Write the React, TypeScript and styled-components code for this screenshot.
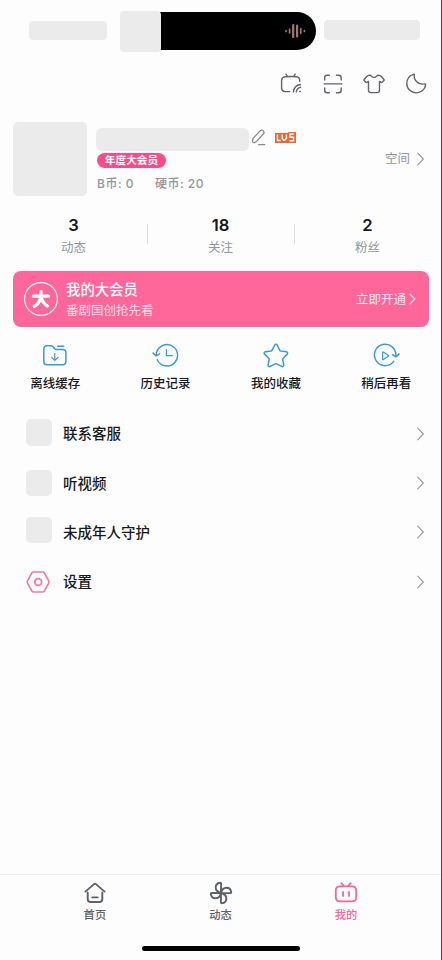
import React from 'react';
import styled, { createGlobalStyle } from 'styled-components';

const GlobalStyle = createGlobalStyle`
  * { box-sizing: border-box; }
  body {
    margin: 0;
    background: #fdfdfd;
    font-family: Inter, "Noto Sans CJK SC", sans-serif;
  }
  svg { display: block; flex: none; }
`;

const Page = styled.div`
  width: 442px;
  height: 960px;
  overflow: hidden;
  display: flex;
  flex-direction: column;
  background: #fdfdfd;
  border-right: 1px solid #45464a;
`;

const Placeholder = styled.div<{ $w: number; $h: number; $r?: number; $top?: number }>`
  flex: none;
  width: ${p => p.$w}px;
  height: ${p => p.$h}px;
  margin-top: ${p => p.$top ?? 0}px;
  border-radius: ${p => p.$r ?? 4}px;
  background: #ebebeb;
`;

const StatusBar = styled.header`
  height: 62px;
  padding: 10px 21px 0 29px;
  display: flex;
  align-items: flex-start;
`;

const IslandGroup = styled.div`
  display: flex;
  align-items: flex-start;
  margin: 0 8px 0 13px;
`;

const Island = styled.div`
  width: 159px;
  height: 38px;
  margin: 2px 0 0 -4px;
  padding-right: 9px;
  display: flex;
  align-items: center;
  justify-content: flex-end;
  background: #000;
  border-radius: 0 19px 19px 0;
`;

const IslandCover = styled(Placeholder)`
  z-index: 1;
`;

const Toolbar = styled.nav`
  height: 44px;
  padding-right: 14px;
  display: flex;
  align-items: center;
  justify-content: flex-end;
  gap: 19.7px;
  color: #62656b;
`;

const Profile = styled.section`
  height: 90px;
  padding: 16px 17px 0 13px;
  display: flex;
`;

const Identity = styled.div`
  flex: 1;
  padding: 6px 0 0 9px;
`;

const NameRow = styled.div`
  height: 23px;
  display: flex;
  align-items: flex-start;
`;

const EditSlot = styled.div`
  width: 15px;
  margin: 1px 8px 0 2px;
  color: #85888d;
`;

const LevelSlot = styled.div`
  margin: 4px 0 0 1px;
`;

const VipTag = styled.div`
  width: 69px;
  height: 15px;
  margin: 2px 0 0 1px;
  border-radius: 8px;
  background: #fb4c86;
  color: #fff;
  font-size: 10.7px;
  line-height: 16px;
  font-weight: 700;
  text-align: center;
`;

const Coins = styled.div`
  display: flex;
  gap: 21px;
  margin: 6px 0 0 1px;
  color: #93969d;
  font-size: 12px;
  font-weight: 500;
  line-height: 19px;
  letter-spacing: 0.5px;
  white-space: nowrap;
`;

const SpaceLink = styled.div`
  height: 20px;
  margin-top: 27px;
  display: flex;
  align-items: center;
  gap: 7px;
  color: #93969d;
  font-size: 12.5px;
  line-height: 18px;
`;

const SpaceLabel = styled.span`
  padding-bottom: 1px;
`;

const Stats = styled.section`
  height: 75px;
  padding-top: 18px;
  display: grid;
  grid-template-columns: repeat(3, 147px);
`;

const Stat = styled.div<{ $divided: boolean }>`
  height: 45px;
  text-align: center;
  position: relative;
  &::after {
    content: "";
    display: ${p => (p.$divided ? 'block' : 'none')};
    position: absolute;
    top: 10px;
    right: -1px;
    width: 1px;
    height: 20px;
    background: #dddee0;
  }
`;

const StatValue = styled.div`
  height: 23px;
  color: #18191c;
  font-size: 16.6px;
  font-weight: 600;
  line-height: 22px;
`;

const StatLabel = styled.div`
  color: #93969d;
  font-size: 12.5px;
  line-height: 21px;
`;

const Banner = styled.section`
  flex: none;
  height: 56px;
  margin: 0 12px 0 12.5px;
  padding: 0 13px 0 11.5px;
  display: flex;
  align-items: center;
  border-radius: 8px;
  background: #ff6699;
  color: #fff;
`;

const BannerText = styled.div`
  flex: 1;
  padding: 2px 0 0 8px;
`;

const BannerTitle = styled.div`
  font-size: 14.4px;
  font-weight: 500;
  line-height: 20px;
`;

const BannerSub = styled.div`
  color: #ffdce8;
  font-size: 12.5px;
  line-height: 21px;
`;

const BannerAction = styled.div`
  display: flex;
  align-items: center;
  gap: 3px;
  color: #ffeaf1;
  font-size: 12.5px;
  line-height: 20px;
`;

const BannerActionLabel = styled.span`
  padding-top: 1px;
`;

const Shortcuts = styled.section`
  height: 81px;
  padding-top: 16px;
  display: grid;
  grid-template-columns: repeat(4, 110.4px);
`;

const Shortcut = styled.div`
  display: flex;
  flex-direction: column;
  align-items: center;
  color: #3a9bd3;
`;

const ShortcutLabel = styled.div`
  margin-top: 5px;
  color: #18191c;
  font-size: 12.5px;
  font-weight: 500;
  line-height: 20px;
`;

const Menu = styled.section`
  flex: 1;
  padding: 1px 17px 0 25px;
`;

const MenuRow = styled.div`
  height: 49.4px;
  display: flex;
  align-items: center;
  color: #9a9a9c;
`;

const MenuIcon = styled.div<{ $shift: number }>`
  width: 38px;
  padding-left: 1px;
  margin-top: ${p => p.$shift}px;
`;

const MenuLabel = styled.div`
  flex: 1;
  padding-top: 1px;
  color: #18191c;
  font-size: 14.5px;
  font-weight: 500;
  line-height: 22px;
`;

const TabBar = styled.footer`
  height: 86px;
  border-top: 1px solid #ececee;
  display: flex;
  flex-direction: column;
  align-items: center;
`;

const Tabs = styled.div`
  height: 71px;
  padding-top: 6px;
  display: grid;
  grid-template-columns: repeat(3, 125.6px);
`;

const Tab = styled.div<{ $active: boolean }>`
  display: flex;
  flex-direction: column;
  align-items: center;
  color: ${p => (p.$active ? '#f5679a' : '#5f6269')};
  font-size: 11.3px;
  font-weight: 500;
  line-height: 16px;
`;

const TabLabel = styled.div`
  margin-top: 2px;
`;

const HomeIndicator = styled.div`
  width: 158px;
  height: 5px;
  border-radius: 3px;
  background: #000;
`;

type IconProps = { w?: number; h?: number; sw?: number; children: React.ReactNode };

const Icon = ({ w = 24, h = 24, sw = 1.4, children }: IconProps) => (
  <svg width={w} height={h} viewBox={`0 0 ${w} ${h}`} fill="none" stroke="currentColor"
    strokeWidth={sw} strokeLinecap="round" strokeLinejoin="round">
    {children}
  </svg>
);

const Chevron = ({ small = false }: { small?: boolean }) => small ? (
  <Icon w={7} h={12} sw={1.1}><path d="M1 1.2 5.8 6 1 10.8" /></Icon>
) : (
  <Icon w={7} h={14} sw={1.1}><path d="M.7 1.2 6.3 7 .7 12.8" /></Icon>
);

const WaveIcon = () => (
  <svg width="23" height="16" viewBox="0 0 23 16" stroke="#9b7a70" strokeLinecap="round">
    <path strokeWidth="1.7" d="M2 7.6v.8M5.6 6v4M16.8 5.7v4.6M20.4 7.6v.8" />
    <path strokeWidth="2.2" d="M9.2 2v12M13.1 2.6v10.8" />
  </svg>
);

const CastIcon = () => (
  <Icon w={22}>
    <path d="M6 2.2 7.4 4.6M15.2 2.2 13.8 4.6M9.8 19.6H5.2c-2.3-.1-3.4-1.1-3.6-3.2V8.2C1.8 6 2.9 5 5.2 4.8c3.7-.3 7.4-.3 11 0 2.3.2 3.4 1.2 3.5 3.4v1.2" />
    <path d="M13.4 19.8c.5-3.7 3.3-6.8 7.2-7.3M16.3 19.8c.4-2.2 2-4 4.3-4.5M19.7 19.5h.6" />
  </Icon>
);

const ScanIcon = () => (
  <Icon w={22}>
    <path d="M2.7 8V5.7c0-1.5.8-2.5 2.4-2.5h2.3M14.4 3.2h2.3c1.6 0 2.5 1 2.5 2.5V8M2.7 16v2.2c0 1.6.8 2.5 2.4 2.5h2.3M14.4 20.7h2.3c1.6 0 2.5-.9 2.5-2.5V16M2.2 11.9h17.6" />
  </Icon>
);

const ShirtIcon = () => (
  <Icon w={22}>
    <path d="M6.6 3.2c.9 0 1.3.3 1.8 1 1.1 1.6 4.1 1.6 5.2 0 .5-.7.9-1 1.8-1 1.3 0 2.2.4 3 1.3l2.3 2.7c.5.6.5 1.1 0 1.6l-1.3 1.3c-.6.6-1.1.5-1.7.1l-1.2-.8v8.9c0 1.6-.7 2.3-2.3 2.3H7.8c-1.6 0-2.3-.7-2.3-2.3V9.4l-1.2.8c-.6.4-1.1.5-1.7-.1L1.3 8.8c-.5-.5-.5-1 0-1.6l2.3-2.7c.8-.9 1.7-1.3 3-1.3Z" />
  </Icon>
);

const MoonIcon = () => (
  <Icon w={22}>
    <path d="M9.3 2.3c-1 4.8 3.4 11 10.3 9.6.7-.1 1.1.2 1 1-.5 4.5-4.5 8-9.1 8-5.2 0-9.7-4-9.7-9.2 0-4.3 2.7-8 6.5-9.3.8-.3 1.1-.4 1-.1Z" />
  </Icon>
);

const EditIcon = () => (
  <Icon w={15} h={17} sw={1.3}>
    <path d="m1.8 11.2.2-1.8L9.1 1.9c1-1 2.3-.9 3.2 0 .9 1 .9 2.1 0 3.1l-6.5 7.1c-.9 1-1.5 1.7-3 1.6-1 0-1.3-.7-1-2.5ZM7.7 15.7h6" />
  </Icon>
);

const LevelIcon = () => (
  <svg width="21" height="11" viewBox="0 0 21 11" fill="none">
    <path d="M1 1h12.3V0H21v11H0V1Z" fill="#f2632f" />
    <path d="M2.5 2.4v6.2h3.2M7.2 2.6v3.7l1.5 2h1l1.7-2V2.6M18.8 2H15v3.2h3.5v3.6h-4.1" stroke="#fff" strokeWidth="1.5" />
  </svg>
);

const BigVipIcon = () => (
  <svg width="34" height="34" viewBox="0 0 34 34" fill="none" stroke="#fff">
    <circle cx="17" cy="17" r="16.4" strokeWidth="1.1" />
    <path d="M9.4 14.2h15.2M17.1 9.7c.3 7-1.9 12-6.8 14.7M17.3 15.3c.7 4 2.7 6.8 6.1 8.7" strokeWidth="3.3" strokeLinecap="round" />
  </svg>
);

const FolderIcon = () => (
  <Icon w={26} h={26} sw={1.5}>
    <path d="M1.8 6c0-2 1-3.2 3.1-3.2h4.2c1.2 0 1.8.4 2.4 1.3l.8 1.2c.5.8 1 1.1 2 1.1h6.3c2.2 0 3.3 1.1 3.3 3.2v8.9c0 2.2-1.1 3.2-3.3 3.2H4.9c-2.1 0-3.1-1-3.1-3.2ZM15.7 3.2h6" />
    <path strokeWidth="1.2" d="M12.8 10.3v7M9.7 14.4l3.1 3 3.2-3" />
  </Icon>
);

const HistoryIcon = () => (
  <Icon w={28} h={26} sw={1.5}>
    <path d="M4.2 12A10.7 10.7 0 1 1 5.2 16.8M1 10l3.2 3 3.3-2.2" />
    <path strokeWidth="1.2" d="M14.4 6.5v6.1h6" />
  </Icon>
);

const StarIcon = () => (
  <Icon w={26} h={26} sw={1.5}>
    <path d="M11.8 2c.5-1 1.8-1 2.3 0l2.6 5.2c.2.4.5.6.9.7l5.8.8c1.2.2 1.7 1.5.8 2.4l-4.1 4.1c-.3.3-.4.7-.4 1.1l1 5.7c.2 1.2-.9 2-2 1.4l-5.2-2.6c-.4-.2-.8-.2-1.2 0l-5.2 2.6c-1.1.6-2.2-.2-2-1.4l1-5.7c.1-.4-.1-.8-.4-1.1l-4.1-4.1c-.9-.9-.4-2.2.8-2.4l5.8-.8c.4-.1.7-.3.9-.7Z" />
  </Icon>
);

const LaterIcon = () => (
  <Icon w={28} h={26} sw={1.5}>
    <path d="M21.7 18.4A10.7 10.7 0 1 1 23.8 13M20.6 11.7l3.2 2.2 3.3-2.8" />
    <path strokeWidth="1.2" d="M10.6 9.4v6.8c0 .5.4.7.8.4l5-3.3c.4-.3.4-.6 0-.9l-5-3.3c-.4-.3-.8-.1-.8.3Z" />
  </Icon>
);

const SettingsIcon = () => (
  <Icon w={26} h={24} sw={1.6}>
    <g stroke="#f37aa4">
      <path d="M7.6 2h9c.9 0 1.4.3 1.8 1l4.3 7.8c.4.8.4 1.6 0 2.4L18.4 21c-.4.7-.9 1-1.8 1h-9c-.9 0-1.4-.3-1.8-1l-4.3-7.8c-.4-.8-.4-1.6 0-2.4L5.8 3c.4-.7.9-1 1.8-1Z" />
      <circle cx="12.2" cy="12" r="3.4" strokeWidth="1.8" />
    </g>
  </Icon>
);

const HomeIcon = () => (
  <Icon sw={1.9}>
    <path d="M2.4 10.6 11 3.1c.7-.6 1.3-.6 2 0l8.6 7.5M4.7 11.4v6.5c0 2.1 1 3.1 3 3.1h8.6c2 0 3-1 3-3.1v-6.5M9.2 16.4h5.6" />
  </Icon>
);

const PinwheelIcon = () => (
  <Icon sw={1.9}>
    {[0, 90, 180, 270].map(a => (
      <path key={a} transform={`rotate(${a} 12 12)`} d="M12 12C8.6 11.2 6.7 9.3 6.7 6.6c0-2.6 1.7-4.5 4.5-4.8.6 0 .9.2.9.8Z" />
    ))}
  </Icon>
);

const MineIcon = () => (
  <Icon sw={1.8}>
    <path d="M7.3 2.2 10 5M16.7 2.2 14 5M6.1 5.4h11.8c3 0 4.3 1.4 4.3 4.1v6.7c0 2.7-1.3 4.2-4.3 4.2H6.1c-3 0-4.3-1.5-4.3-4.2V9.5c0-2.7 1.3-4.1 4.3-4.1ZM9.1 10.9v4M15 10.9v4" />
  </Icon>
);

const stats = [['3', '动态'], ['18', '关注'], ['2', '粉丝']];

const shortcuts = [
  { label: '离线缓存', Glyph: FolderIcon },
  { label: '历史记录', Glyph: HistoryIcon },
  { label: '我的收藏', Glyph: StarIcon },
  { label: '稍后再看', Glyph: LaterIcon },
];

const menu = [
  { label: '联系客服', shift: -2, h: 27 },
  { label: '听视频', shift: 0, h: 26 },
  { label: '未成年人守护', shift: -4, h: 26 },
  { label: '设置', shift: 0, h: 0 },
];

const tabs = [
  { label: '首页', Glyph: HomeIcon, active: false },
  { label: '动态', Glyph: PinwheelIcon, active: false },
  { label: '我的', Glyph: MineIcon, active: true },
];

export default function App() {
  return (
    <>
      <GlobalStyle />
      <Page>
        <StatusBar>
          <Placeholder $w={78} $h={19} $top={11} />
          <IslandGroup>
            <IslandCover $w={41} $h={41} $top={0.5} />
            <Island><WaveIcon /></Island>
          </IslandGroup>
          <Placeholder $w={96} $h={20} $top={10} />
        </StatusBar>
        <Toolbar>
          <CastIcon />
          <ScanIcon />
          <ShirtIcon />
          <MoonIcon />
        </Toolbar>
        <Profile>
          <Placeholder $w={74} $h={74} $r={5} />
          <Identity>
            <NameRow>
              <Placeholder $w={153} $h={23} $r={6} />
              <EditSlot><EditIcon /></EditSlot>
              <LevelSlot><LevelIcon /></LevelSlot>
            </NameRow>
            <VipTag>年度大会员</VipTag>
            <Coins><span>B币: 0</span><span>硬币: 20</span></Coins>
          </Identity>
          <SpaceLink><SpaceLabel>空间</SpaceLabel><Chevron /></SpaceLink>
        </Profile>
        <Stats>
          {stats.map(([value, label], i) => (
            <Stat key={label} $divided={i < 2}>
              <StatValue>{value}</StatValue>
              <StatLabel>{label}</StatLabel>
            </Stat>
          ))}
        </Stats>
        <Banner>
          <BigVipIcon />
          <BannerText>
            <BannerTitle>我的大会员</BannerTitle>
            <BannerSub>番剧国创抢先看</BannerSub>
          </BannerText>
          <BannerAction><BannerActionLabel>立即开通</BannerActionLabel><Chevron small /></BannerAction>
        </Banner>
        <Shortcuts>
          {shortcuts.map(({ label, Glyph }) => (
            <Shortcut key={label}>
              <Glyph />
              <ShortcutLabel>{label}</ShortcutLabel>
            </Shortcut>
          ))}
        </Shortcuts>
        <Menu>
          {menu.map(({ label, shift, h }) => (
            <MenuRow key={label}>
              <MenuIcon $shift={shift}>
                {h ? <Placeholder $w={26} $h={h} $r={5} /> : <SettingsIcon />}
              </MenuIcon>
              <MenuLabel>{label}</MenuLabel>
              <Chevron />
            </MenuRow>
          ))}
        </Menu>
        <TabBar>
          <Tabs>
            {tabs.map(({ label, Glyph, active }) => (
              <Tab key={label} $active={active}>
                <Glyph />
                <TabLabel>{label}</TabLabel>
              </Tab>
            ))}
          </Tabs>
          <HomeIndicator />
        </TabBar>
      </Page>
    </>
  );
}
